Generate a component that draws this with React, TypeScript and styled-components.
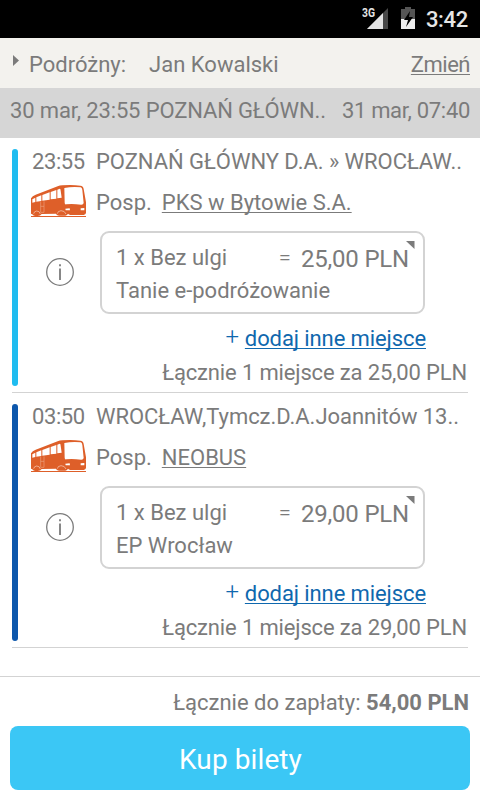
import React from "react";
import styled, { createGlobalStyle } from "styled-components";

const GlobalStyle = createGlobalStyle`
  * { box-sizing: border-box; }
  body { margin: 0; background: #fff; }
`;

const Screen = styled.div`
  width: 480px;
  height: 800px;
  display: flex;
  flex-direction: column;
  overflow: hidden;
  background: #fff;
  color: #7b7b7b;
  font: 400 22px/30px Roboto, sans-serif;
  white-space: nowrap;
`;

const StatusBar = styled.header`
  height: 38px;
  flex: none;
  display: flex;
  justify-content: flex-end;
  background: #000;
  padding-right: 12px;
`;

const StatusIcons = styled.svg`
  width: 64px;
  height: 38px;
`;

const NetworkLabel = styled.text`
  font: 700 12px Roboto, sans-serif;
  fill: #e4e4e4;
`;

const Clock = styled.span`
  color: #e6e6e6;
  font-size: 22px;
  font-weight: 500;
  line-height: 38px;
  padding-top: 1px;
  letter-spacing: -0.3px;
`;

const TravelerBar = styled.div`
  height: 50px;
  flex: none;
  display: flex;
  padding: 12px 10px 0 12px;
  background: #f3f2ee;
`;

const Expand = styled.svg`
  width: 7px;
  height: 11px;
  margin: 5px 9px 0 1px;
`;

const TravelerName = styled.span`
  margin-left: 23px;
`;

const Underlined = styled.a<{ $color?: string }>`
  color: ${(p) => p.$color ?? "inherit"};
  text-decoration: underline;
  text-decoration-thickness: 1px;
  text-underline-offset: 2px;
  text-decoration-skip-ink: none;
`;

const ChangeLink = styled(Underlined)`
  margin-left: auto;
  letter-spacing: -0.5px;
`;

const RouteBar = styled.div`
  height: 50px;
  flex: none;
  display: flex;
  justify-content: space-between;
  padding: 8px 10px 0;
  background: #d6d6d6;
`;

const Departure = styled.span`
  letter-spacing: -0.14px;
`;

const Arrival = styled.span`
  letter-spacing: -0.31px;
`;

const Segments = styled.main`
  flex: 1;
  padding: 0 12px;
`;

const Segment = styled.section`
  height: 255px;
  display: flex;
  padding-top: 11px;
  border-bottom: 1px solid #d3d3d3;
`;

const ColorBar = styled.div<{ $color: string }>`
  width: 6px;
  height: 237px;
  flex: none;
  border-radius: 3px;
  background: ${(p) => p.$color};
`;

const SegmentBody = styled.div`
  flex: 1;
  display: grid;
  grid-template-columns: 78px 1fr;
  grid-template-rows: 36px 46px 91px 36px 30px;
`;

const Time = styled.span`
  padding: 0 0 0 14px;
  margin-top: -2px;
  letter-spacing: -0.4px;
`;

const Stops = styled.span`
  margin-top: -2px;
  letter-spacing: -0.04px;
`;

const Bus = styled.svg`
  width: 55px;
  height: 32px;
  margin: 0 0 0 13px;
`;

const Carrier = styled.span`
  margin-top: 3px;
`;

const CarrierLink = styled(Underlined)`
  margin-left: 10px;
`;

const Info = styled.svg`
  width: 30px;
  height: 30px;
  margin: 26px 0 0 27px;
`;

const Ticket = styled.div`
  width: 325px;
  height: 83px;
  margin-left: 4px;
  padding: 10px 8px 0 14px;
  border: 2px solid #d3d3d3;
  border-radius: 9px;
`;

const FareLine = styled.div`
  height: 33px;
  display: flex;
`;

const Equals = styled.span`
  margin-left: auto;
  margin-right: 10px;
  font-weight: 300;
`;

const Price = styled.span`
  font-size: 24px;
  line-height: 32px;
  letter-spacing: -0.2px;
`;

const Corner = styled.svg`
  width: 9px;
  height: 8px;
  margin: -2px 0 0 -3px;
`;

const AddSeat = styled.div`
  grid-column: 1 / 3;
  justify-self: end;
  display: flex;
  margin-right: 42px;
  padding-top: 2px;
  letter-spacing: -0.1px;
  color: #0f68ae;
`;

const Plus = styled.span`
  margin: -2px 6px 0 0;
  font-weight: 300;
  font-size: 24px;
`;

const Subtotal = styled.div`
  grid-column: 1 / 3;
  justify-self: end;
  margin-right: 1px;
  letter-spacing: -0.15px;
`;

const Footer = styled.footer`
  height: 124px;
  flex: none;
  border-top: 1px solid #d3d3d3;
  padding: 11px 10px 10px;
  display: flex;
  flex-direction: column;
`;

const Total = styled.div`
  height: 38px;
  padding-right: 1px;
  text-align: right;
`;

const Amount = styled.b`
  font-weight: 700;
`;

const BuyButton = styled.button`
  height: 64px;
  border: 0;
  border-radius: 8px;
  background: #3bc7f5;
  color: #fff;
  font: 400 28px/64px Roboto, sans-serif;
  letter-spacing: 0.1px;
  padding: 2px 0 0 1px;
`;

const BusIcon = () => (
  <Bus viewBox="0 0 165 96">
    <path fill="#de5f29" d="M0 40Q4 33 14 29L80 4Q86 1 94 1Q125-1 148 2Q157 3 158 12L165 52V84Q164 89 158 90H118Q113 89 111 86Q109 91 103 92H84Q76 91 75 86L32 87Q28 93 20 93H12Q5 91 4 88L0 86Z" />
    <path fill="#fff" d="M4 43L13 38V51L4 53ZM16 37L31 31V48L16 50ZM34 30L56 22V44L34 47ZM59 21L76 15V41L59 43ZM79 14L86 11Q89 11 89 17L92 38L79 40ZM100 9Q125 4 149 7Q153 8 154 15L158 54Q157 59 151 59Q124 56 106 58Q101 59 101 53ZM103 71L116 70L117 76H104ZM149 70L160 69V76H149Z" />
    <path fill="none" stroke="#eda27f" strokeWidth="2" d="M29 50V82H39V49M29 64H39" />
    <path fill="none" stroke="#f7d2c1" strokeWidth="2" d="M8 86Q9 79 17 78Q26 78 28 87M79 86Q80 78 90 77Q101 77 105 87" />
    <path fill="#de5f29" d="M0 93H165V96H0Z" />
  </Bus>
);

interface SegmentData {
  color: string;
  time: string;
  stops: string;
  carrier: string;
  price: string;
  fare: string;
}

const segments: SegmentData[] = [
  { color: "#1fbcf0", time: "23:55", stops: "POZNAŃ GŁÓWNY D.A. » WROCŁAW..", carrier: "PKS w Bytowie S.A.", price: "25,00 PLN", fare: "Tanie e-podróżowanie" },
  { color: "#0d57ac", time: "03:50", stops: "WROCŁAW,Tymcz.D.A.Joannitów 13..", carrier: "NEOBUS", price: "29,00 PLN", fare: "EP Wrocław" },
];

export default function App() {
  return (
    <Screen>
      <GlobalStyle />
      <StatusBar>
        <StatusIcons viewBox="0 0 64 38">
          <path fill="#484848" d="M26 8V29H5Z" />
          <path fill="#e4e4e4" d="M21 13V29H5Z" />
          <NetworkLabel x="0" y="17" textLength="13" lengthAdjust="spacingAndGlyphs">3G</NetworkLabel>
          <path fill="#555" d="M39 9H43V7H49V9H53V19H39Z" />
          <path fill="#eee" d="M39 19H53V29H39Z" />
          <path fill="#000" d="M48 11L42 20H46L44 27L51 17H47Z" />
        </StatusIcons>
        <Clock>3:42</Clock>
      </StatusBar>
      <TravelerBar>
        <Expand viewBox="0 0 7 11"><path fill="#7b7b7b" d="M0 0L6 5.5L0 11Z" /></Expand>
        <span>Podróżny:</span>
        <TravelerName>Jan Kowalski</TravelerName>
        <ChangeLink>Zmień</ChangeLink>
      </TravelerBar>
      <RouteBar>
        <Departure>30 mar, 23:55 POZNAŃ GŁÓWN..</Departure>
        <Arrival>31 mar, 07:40</Arrival>
      </RouteBar>
      <Segments>
        {segments.map((s) => (
          <Segment key={s.time}>
            <ColorBar $color={s.color} />
            <SegmentBody>
              <Time>{s.time}</Time>
              <Stops>{s.stops}</Stops>
              <BusIcon />
              <Carrier>Posp.<CarrierLink>{s.carrier}</CarrierLink></Carrier>
              <Info viewBox="0 0 30 30" fill="none" stroke="#7b7b7b">
                <circle cx="15" cy="15" r="13.3" strokeWidth="1.3" />
                <path strokeWidth="1.8" d="M15 11.5V23M15 7.3V9.3" />
              </Info>
              <Ticket>
                <FareLine>
                  <span>1 x Bez ulgi</span>
                  <Equals>=</Equals>
                  <Price>{s.price}</Price>
                  <Corner viewBox="0 0 9 8"><path fill="#7b7b7b" d="M0 0H8.5V8Z" /></Corner>
                </FareLine>
                <div>{s.fare}</div>
              </Ticket>
              <AddSeat><Plus>+</Plus><Underlined $color="#0f68ae">dodaj inne miejsce</Underlined></AddSeat>
              <Subtotal>Łącznie 1 miejsce za {s.price}</Subtotal>
            </SegmentBody>
          </Segment>
        ))}
      </Segments>
      <Footer>
        <Total>Łącznie do zapłaty: <Amount>54,00 PLN</Amount></Total>
        <BuyButton>Kup bilety</BuyButton>
      </Footer>
    </Screen>
  );
}
